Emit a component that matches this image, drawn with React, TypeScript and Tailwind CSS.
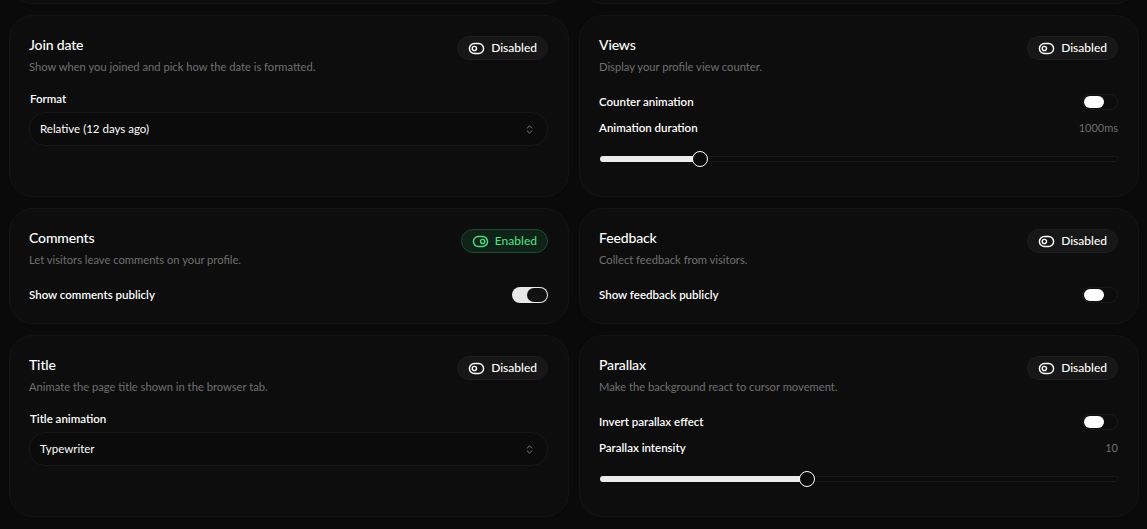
import { ChevronsUpDown, ToggleLeft, ToggleRight } from 'lucide-react'

const font = { fontFamily: 'Lato, "Noto Sans", sans-serif' }

function StatusPill({ on }: { on: boolean }) {
  return on ? (
    <span className="inline-flex h-6 items-center gap-1.5 rounded-full border border-[#1c4a32] bg-[#0f2218] px-2.5 text-xs font-medium text-[#4ade80]">
      <ToggleRight size={17} strokeWidth={2} />
      Enabled
    </span>
  ) : (
    <span className="inline-flex h-6 items-center gap-1.5 rounded-full border border-[#1d1d1d] bg-[#171717] px-2.5 text-xs font-medium text-white">
      <ToggleLeft size={17} strokeWidth={2} />
      Disabled
    </span>
  )
}

function Switch({ on }: { on: boolean }) {
  return on ? (
    <span className="flex h-4 w-9 items-center justify-end rounded-full bg-[#e8e8e8] p-px">
      <span className="h-3.5 w-5 rounded-full bg-[#111]" />
    </span>
  ) : (
    <span className="flex h-4 w-9 items-center rounded-full border border-[#1a1a1a] bg-[#0c0c0c] px-px">
      <span className="h-3 w-5 rounded-full bg-white" />
    </span>
  )
}

function Slider({ value }: { value: number }) {
  return (
    <div className="relative mt-[15px] flex h-4 items-center">
      <div className="h-1.5 w-full rounded-full border border-[#181818] bg-[#0b0b0b]" />
      <div className="absolute left-0 h-1.5 rounded-full bg-[#ececec]" style={{ width: `${value * 100}%` }} />
      <div
        className="absolute h-4 w-4 -translate-x-1/2 rounded-full border border-white bg-[#0a0a0a]"
        style={{ left: `${value * 100}%` }}
      />
    </div>
  )
}

function Select({ label, value }: { label: string; value: string }) {
  return (
    <>
      <p className="mt-[16px] text-[11.5px] leading-4 font-semibold text-white">{label}</p>
      <div className="mt-[5px] -ml-px flex h-[34px] items-center justify-between rounded-2xl border border-[#171717] bg-[#0b0b0b] pr-3 pl-[10px]">
        <span className="text-[11.5px] text-white">{value}</span>
        <ChevronsUpDown size={11} className="text-[#8a8a8a]" />
      </div>
    </>
  )
}

function Card({
  title,
  desc,
  on = false,
  children,
}: {
  title: string
  desc: string
  on?: boolean
  children?: React.ReactNode
}) {
  return (
    <div className="rounded-3xl border border-[#141414] bg-[#0d0d0d] p-5">
      <div className="flex items-start justify-between">
        <div className="-ml-px">
          <h3 className="text-[14px] leading-[17px] font-medium tracking-[-0.01em] text-white">{title}</h3>
          <p className="mt-[6px] text-[11.2px] leading-4 text-[#707070]">{desc}</p>
        </div>
        <StatusPill on={on} />
      </div>
      {children}
    </div>
  )
}

function SwitchRow({ label, on }: { label: string; on: boolean }) {
  return (
    <div className="mt-[19px] -ml-px flex h-4 items-center justify-between">
      <span className="text-[11.5px] font-semibold text-white">{label}</span>
      <Switch on={on} />
    </div>
  )
}

function ValueRow({ label, value }: { label: string; value: string }) {
  return (
    <div className="mt-[10px] -ml-px flex h-4 items-center justify-between">
      <span className="text-[11.5px] font-semibold text-white">{label}</span>
      <span className="text-[11px] text-[#6e6e6e]">{value}</span>
    </div>
  )
}

export default function App() {
  return (
    <div className="h-[529px] overflow-hidden bg-[#0a0a0a]" style={font}>
      <div className="-mt-[96px] grid grid-cols-2 gap-x-[10px] gap-y-[11px] pr-[8px] pl-[9px]">
        <div className="h-[100px] rounded-3xl border border-[#141414] bg-[#0d0d0d]" />
        <div className="h-[100px] rounded-3xl border border-[#141414] bg-[#0d0d0d]" />

        <Card title="Join date" desc="Show when you joined and pick how the date is formatted.">
          <Select label="Format" value="Relative (12 days ago)" />
        </Card>
        <Card title="Views" desc="Display your profile view counter.">
          <SwitchRow label="Counter animation" on={false} />
          <ValueRow label="Animation duration" value="1000ms" />
          <div className="pb-[9px]">
            <Slider value={0.193} />
          </div>
        </Card>

        <Card title="Comments" desc="Let visitors leave comments on your profile." on>
          <SwitchRow label="Show comments publicly" on />
        </Card>
        <Card title="Feedback" desc="Collect feedback from visitors.">
          <SwitchRow label="Show feedback publicly" on={false} />
        </Card>

        <Card title="Title" desc="Animate the page title shown in the browser tab.">
          <Select label="Title animation" value="Typewriter" />
        </Card>
        <Card title="Parallax" desc="Make the background react to cursor movement.">
          <SwitchRow label="Invert parallax effect" on={false} />
          <ValueRow label="Parallax intensity" value="10" />
          <div className="pb-[9px]">
            <Slider value={0.4} />
          </div>
        </Card>
      </div>
    </div>
  )
}
